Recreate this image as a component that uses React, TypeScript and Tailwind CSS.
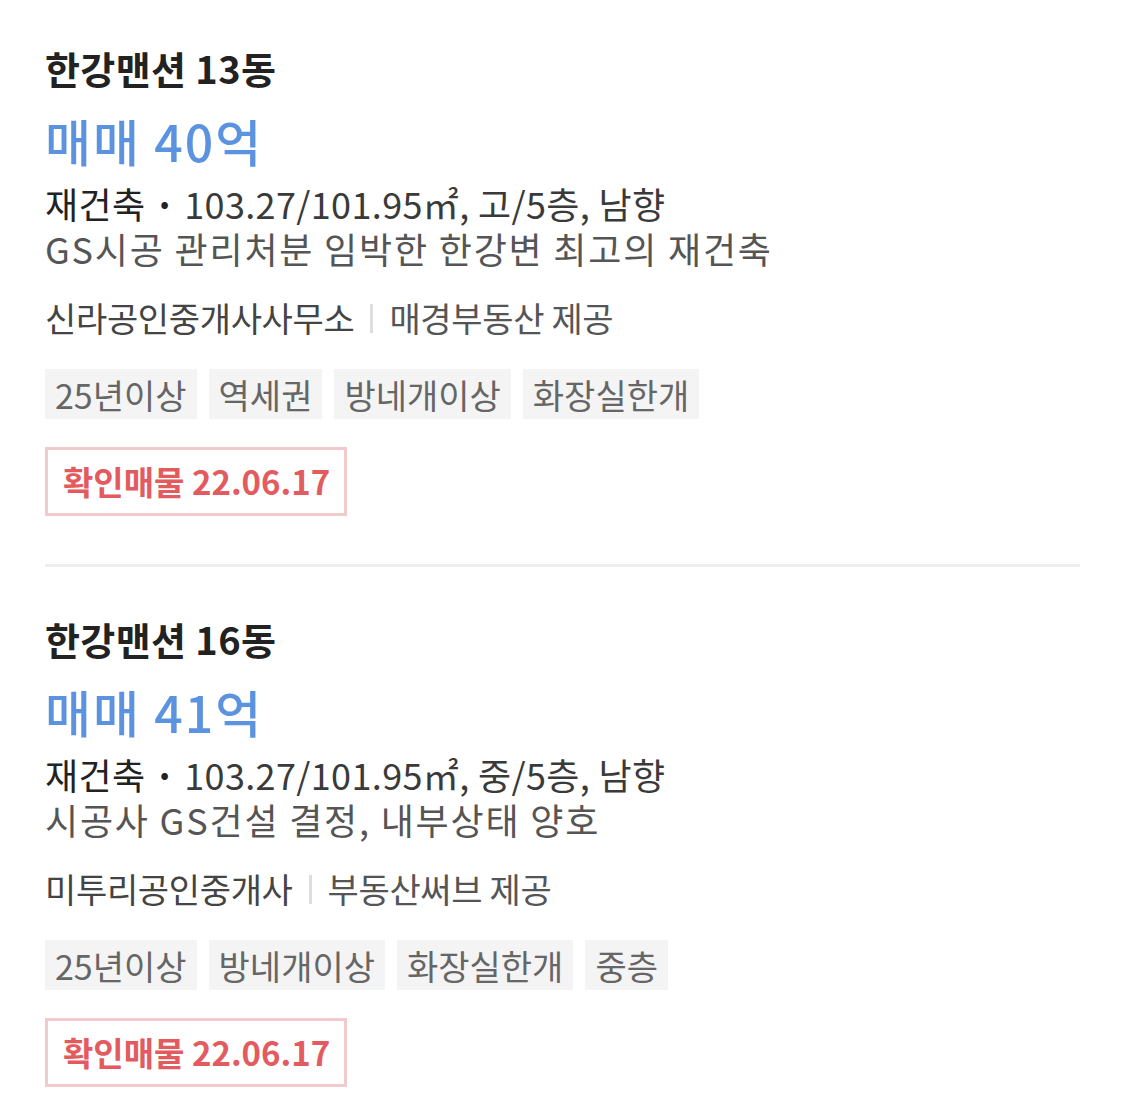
const font = { fontFamily: '"Noto Sans CJK KR", "Noto Sans", sans-serif' };

interface Listing {
  name: string;
  price: string;
  spec: string;
  desc: string;
  broker: string;
  provider: string;
  tags: string[];
  date: string;
}

const listings: Listing[] = [
  {
    name: "한강맨션 13동",
    price: "매매 40억",
    spec: "103.27/101.95㎡, 고/5층, 남향",
    desc: "GS시공 관리처분 임박한 한강변 최고의 재건축",
    broker: "신라공인중개사사무소",
    provider: "매경부동산 제공",
    tags: ["25년이상", "역세권", "방네개이상", "화장실한개"],
    date: "22.06.17",
  },
  {
    name: "한강맨션 16동",
    price: "매매 41억",
    spec: "103.27/101.95㎡, 중/5층, 남향",
    desc: "시공사 GS건설 결정, 내부상태 양호",
    broker: "미투리공인중개사",
    provider: "부동산써브 제공",
    tags: ["25년이상", "방네개이상", "화장실한개", "중층"],
    date: "22.06.17",
  },
];

function Card({ item }: { item: Listing }) {
  return (
    <div className="flex flex-col items-start">
      <div className="text-[38px] font-bold leading-[44px] tracking-[0.01em] text-[#222]">
        {item.name}
      </div>
      <div className="mt-[20px] text-[50px] font-medium leading-[60px] tracking-[0.04em] text-[#5b93e0]">
        {item.price}
      </div>
      <div className="mt-[11px] text-[36px] leading-[45px] tracking-[0.01em] text-[#3a3a3a]">
        <span className="text-[#222]">재건축</span>
        <span className="font-bold text-[#222]"> · </span>
        {item.spec}
      </div>
      <div className="text-[36px] leading-[45px] tracking-[0.05em] text-[#555]">
        {item.desc}
      </div>
      <div className="mt-[26px] flex items-center text-[34px] leading-[42px] tracking-[-0.01em] text-[#444]">
        <span>{item.broker}</span>
        <span className="mx-[16px] h-[29px] w-[3px] bg-[#dddddd]" />
        <span className="text-[#555]">{item.provider}</span>
      </div>
      <div className="mt-[30px] flex gap-[12px]">
        {item.tags.map((t) => (
          <span
            key={t}
            className="flex h-[50px] items-center bg-[#f4f4f4] px-[10px] text-[34px] tracking-[0em] text-[#666]"
          >
            {t}
          </span>
        ))}
      </div>
      <div className="mt-[28px] flex h-[69px] items-center border-[3px] border-[#f3cacc] pl-[15px] pr-[14px] text-[33px] font-bold tracking-[0em] text-[#e35b5f]">
        확인매물 {item.date}
      </div>
    </div>
  );
}

export default function App() {
  return (
    <div className="min-h-screen bg-white px-[45px] pt-[46px]" style={font}>
      <Card item={listings[0]} />
      <div className="mb-[50px] mt-[48px] h-[3px] bg-[#eeeeee]" />
      <Card item={listings[1]} />
    </div>
  );
}
